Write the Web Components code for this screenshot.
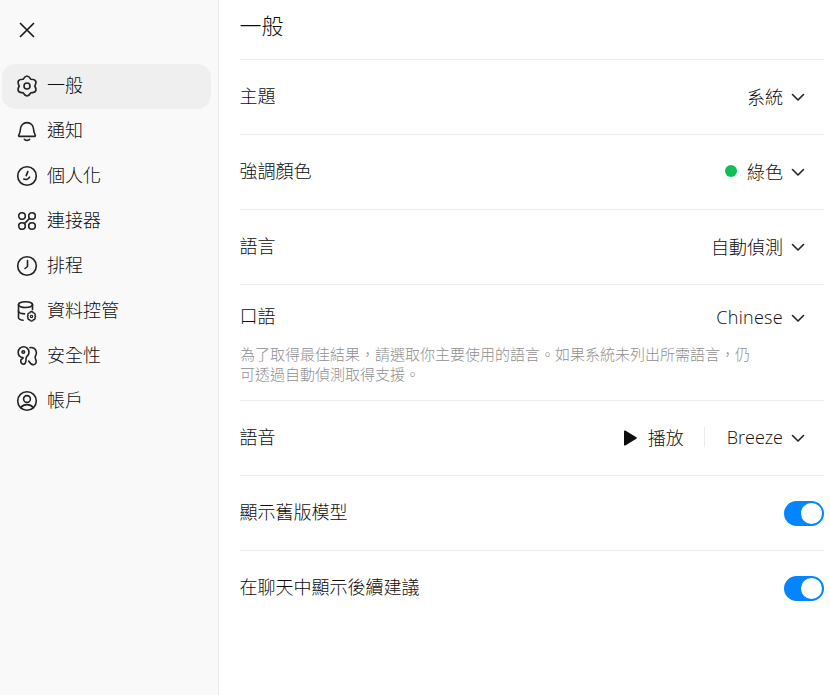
<!DOCTYPE html>
<html lang="zh-Hant">
<head>
<meta charset="utf-8">
<title>一般</title>
<style>
    html, body { margin: 0; height: 100%; background: #fff; }
    body {
        font-family: "Noto Sans CJK TC", "Noto Sans", sans-serif;
        font-weight: 300;
        color: #0d0d0d;
    }
    settings-app { height: 695px; }
    svg { display: block; }
</style>
</head>
<body>
<settings-app>
    <nav-item slot="nav" label="一般" active>
        <svg slot="icon" width="22" height="22" viewBox="0 0 22 22" fill="none" stroke="#222" stroke-width="1.6" stroke-linejoin="round"><path d="M14.900 4.250Q11-2.200 7.100 4.250Q-.43 4.400 3.200 11Q-.43 17.600 7.100 17.750Q11 24.200 14.900 17.750Q22.430 17.600 18.800 11Q22.430 4.400 14.900 4.250z"/><circle cx="11" cy="11" r="3"/></svg>
    </nav-item>
    <nav-item slot="nav" label="通知">
        <svg slot="icon" width="22" height="22" viewBox="0 0 22 22" fill="none" stroke="#222" stroke-width="1.600" stroke-linecap="round" stroke-linejoin="round"><path d="M4.400 9.200a6.600 6.600 0 0 1 13.200 0c0 3 1 4.700 1.700 6 .3.700 0 1.200-.8 1.200H3.500c-.8 0-1.100-.5-.8-1.200.7-1.300 1.700-3 1.700-6z"/><path d="M8.400 19.300c1.500 1.200 3.700 1.200 5.200 0"/></svg>
    </nav-item>
    <nav-item slot="nav" label="個人化">
        <svg slot="icon" width="22" height="22" viewBox="0 0 22 22" fill="none" stroke="#222" stroke-width="1.600" stroke-linecap="round" stroke-linejoin="round"><circle cx="11" cy="11" r="9.300"/><path d="M11.800 6.600 10.200 10.600"/><path d="M7.800 14.100c2 .9 4.600.2 5.800-1.900"/></svg>
    </nav-item>
    <nav-item slot="nav" label="連接器">
        <svg slot="icon" width="22" height="22" viewBox="0 0 22 22" fill="none" stroke="#222" stroke-width="1.600"><circle cx="6" cy="6" r="3.300"/><circle cx="16" cy="6" r="3.300"/><circle cx="6" cy="16" r="3.300"/><circle cx="16" cy="16" r="3.300"/><path d="m8.400 13.600 5.200-5.200"/></svg>
    </nav-item>
    <nav-item slot="nav" label="排程">
        <svg slot="icon" width="22" height="22" viewBox="0 0 22 22" fill="none" stroke="#222" stroke-width="1.600" stroke-linecap="round" stroke-linejoin="round"><circle cx="11" cy="11" r="9.300"/><path d="M11.500 5.500v6l-2.500 2"/></svg>
    </nav-item>
    <nav-item slot="nav" label="資料控管">
        <svg slot="icon" width="22" height="22" viewBox="0 0 22 22" fill="none" stroke="#222" stroke-width="1.600" stroke-linecap="round" stroke-linejoin="round"><ellipse cx="9.500" cy="4.600" rx="7" ry="2.900"/><path d="M2.500 4.600v13c0 1.400 1.800 2.400 4.500 2.700"/><path d="M16.500 4.600v5"/><path d="M2.500 11c0 1.500 2.500 2.700 6 2.900"/><circle cx="15.500" cy="16.500" r="1.200" stroke-width="1.200"/><path stroke-width="1.400" d="m14.300 11.900 1.200-.4 1.200.4.500 1 1.200.2.800 1-.3 1.200.7 1-.7 1 .3 1.200-.8 1-1.200.2-.5 1-1.200.4-1.200-.4-.5-1-1.200-.2-.8-1 .3-1.200-.7-1 .7-1-.3-1.200.8-1 1.200-.2z"/></svg>
    </nav-item>
    <nav-item slot="nav" label="安全性">
        <svg slot="icon" width="22" height="22" viewBox="0 0 22 22" fill="none" stroke="#222" stroke-width="1.600" stroke-linecap="round" stroke-linejoin="round"><path d="M6.800 13.200c-2.700-.6-5-2.700-5-5.700a5.400 5.400 0 0 1 10.800 0c0 1.700-.8 3-2 4.100-.8.800-1 1.500-1 2.700 0 2.400-.7 5.200-2.500 5.200-2.500 0-3-2.700-2.600-4.300z" transform="translate(.4 -.3)"/><circle cx="7.300" cy="7" r="1.300"/><path d="M14 2.700c3.300-.7 6.400 1.700 6.400 5 0 1.700-.7 2.700-1.200 3.900-.5 1.200.5 2.500.9 3.900.5 2-.6 4.300-2.800 4.300-2.400 0-3.600-2.300-4.600-3.800"/></svg>
    </nav-item>
    <nav-item slot="nav" label="帳戶">
        <svg slot="icon" width="22" height="22" viewBox="0 0 22 22" fill="none" stroke="#222" stroke-width="1.600" stroke-linecap="round"><circle cx="11" cy="11" r="9.300"/><circle cx="11" cy="9" r="3.400"/><path d="M4.800 17.600c1.500-2 3.600-3 6.200-3s4.700 1 6.200 3"/></svg>
    </nav-item>

    <setting-row label="主題"><value-select>系統</value-select></setting-row>
    <setting-row label="強調顏色"><value-select dot>綠色</value-select></setting-row>
    <setting-row label="語言"><value-select>自動偵測</value-select></setting-row>
    <setting-row label="口語" note="為了取得最佳結果，請選取你主要使用的語言。如果系統未列出所需語言，仍可透過自動偵測取得支援。"><value-select latin spaced>Chinese</value-select></setting-row>
    <setting-row label="語音">
        <play-button>播放</play-button>
        <value-select latin>Breeze</value-select>
    </setting-row>
    <setting-row label="顯示舊版模型"><toggle-switch></toggle-switch></setting-row>
    <setting-row label="在聊天中顯示後續建議" last><toggle-switch></toggle-switch></setting-row>
</settings-app>

<script>
class SettingsApp extends HTMLElement {
    constructor() {
        super();
        this.attachShadow({ mode: 'open' });
        this.shadowRoot.innerHTML = `
            <style>
                :host { display: flex; overflow: hidden; }
                aside {
                    flex: none;
                    width: 209px;
                    padding: 0 7px 0 2px;
                    background: #f9f9f9;
                    border-right: 1px solid #ececec;
                }
                .close {
                    display: block;
                    height: 64px;
                    padding: 20px 0 0 16px;
                    box-sizing: border-box;
                }
                main { flex: 1; min-width: 0; padding: 0 6px 0 21px; }
                h1 {
                    margin: 0;
                    height: 59px;
                    font-size: 22px;
                    font-weight: 300;
                    line-height: 49px;
                    text-indent: -.5px;
                    border-bottom: 1px solid #ececec;
                }
            </style>
            <aside>
                <span class="close">
                    <svg width="18" height="18" viewBox="0 0 18 18" fill="none" stroke="#1a1a1a" stroke-width="1.700" stroke-linecap="round"><path d="M2.500 2.500l13 13M15.500 2.500l-13 13"/></svg>
                </span>
                <slot name="nav"></slot>
            </aside>
            <main>
                <h1>一般</h1>
                <slot></slot>
            </main>
        `;
    }
}

class NavItem extends HTMLElement {
    constructor() {
        super();
        this.attachShadow({ mode: 'open' });
        this.shadowRoot.innerHTML = `
            <style>
                :host {
                    display: flex;
                    align-items: center;
                    gap: 9px;
                    height: 45px;
                    padding-left: 14px;
                    border-radius: 14px;
                    font-size: 18px;
                }
                :host([active]) { background: #efefef; }
                span { position: relative; top: -3px; }
                ::slotted(svg) { margin-top: -1px; }
            </style>
            <slot name="icon"></slot>
            <span>${this.getAttribute('label')}</span>
        `;
    }
}

class SettingRow extends HTMLElement {
    constructor() {
        super();
        this.attachShadow({ mode: 'open' });
        const note = this.getAttribute('note');
        this.shadowRoot.innerHTML = `
            <style>
                :host {
                    display: block;
                    border-bottom: 1px solid #ececec;
                }
                :host([last]) { border-bottom: 0; }
                :host([note]) .line { height: 64px; }
                :host([note]) .right { top: 0; }
                .line {
                    display: flex;
                    align-items: center;
                    justify-content: space-between;
                    height: 74px;
                    font-size: 18px;
                }
                .label { position: relative; top: -2px; left: -.5px; }
                .right { display: flex; align-items: center; position: relative; top: -1px; }
                .note {
                    width: 512px;
                    margin: -5px 0 0;
                    padding-bottom: 16px;
                    font-size: 15px;
                    line-height: 20px;
                    color: #8f8f8f;
                }
            </style>
            <div class="line">
                <span class="label">${this.getAttribute('label')}</span>
                <span class="right"><slot></slot></span>
            </div>
            ${note ? `<p class="note">${note}</p>` : ''}
        `;
    }
}

class ValueSelect extends HTMLElement {
    constructor() {
        super();
        this.attachShadow({ mode: 'open' });
        const dot = this.hasAttribute('dot') ? '<i></i>' : '';
        this.shadowRoot.innerHTML = `
            <style>
                :host {
                    display: flex;
                    align-items: center;
                    margin-right: 18px;
                    font-size: 18px;
                }
                :host([latin]) { font-family: "Open Sans", sans-serif; }
                :host([spaced]) { letter-spacing: .3px; }
                i {
                    width: 12px;
                    height: 12px;
                    margin-right: 10px;
                    border-radius: 50%;
                    background: #0ebf57;
                }
                svg { margin: 2px 0 0 7px; display: block; }
            </style>
            ${dot}<span><slot></slot></span>
            <svg width="16" height="16" viewBox="0 0 16 16" fill="none" stroke="#222" stroke-width="1.600" stroke-linecap="round" stroke-linejoin="round"><path d="m2.500 5.500 5.500 5.500 5.500-5.500"/></svg>
        `;
    }
}

class PlayButton extends HTMLElement {
    constructor() {
        super();
        this.attachShadow({ mode: 'open' });
        this.shadowRoot.innerHTML = `
            <style>
                :host {
                    display: flex;
                    align-items: center;
                    gap: 11px;
                    height: 20px;
                    padding-right: 20px;
                    margin-right: 22px;
                    border-right: 1px solid #ececec;
                    font-size: 18px;
                }
                svg { display: block; margin-top: 1px; }
            </style>
            <svg width="14" height="16" viewBox="0 0 14 16"><path fill="#0d0d0d" d="M1 1.300c0-.8.700-1.100 1.300-.7l11 6.700c.6.400.6 1 0 1.400l-11 6.700c-.6.400-1.300.1-1.300-.7z"/></svg>
            <span><slot></slot></span>
        `;
    }
}

class ToggleSwitch extends HTMLElement {
    constructor() {
        super();
        this.attachShadow({ mode: 'open' });
        this.shadowRoot.innerHTML = `
            <style>
                :host {
                    display: block;
                    width: 40px;
                    height: 25px;
                    border-radius: 13px;
                    background: #0285ff;
                    position: relative;
                    top: 1px;
                }
                b {
                    position: absolute;
                    right: 2px;
                    top: 2px;
                    width: 21px;
                    height: 21px;
                    border-radius: 50%;
                    background: #fff;
                }
            </style>
            <b></b>
        `;
    }
}

customElements.define('settings-app', SettingsApp);
customElements.define('nav-item', NavItem);
customElements.define('setting-row', SettingRow);
customElements.define('value-select', ValueSelect);
customElements.define('play-button', PlayButton);
customElements.define('toggle-switch', ToggleSwitch);
</script>
</body>
</html>
